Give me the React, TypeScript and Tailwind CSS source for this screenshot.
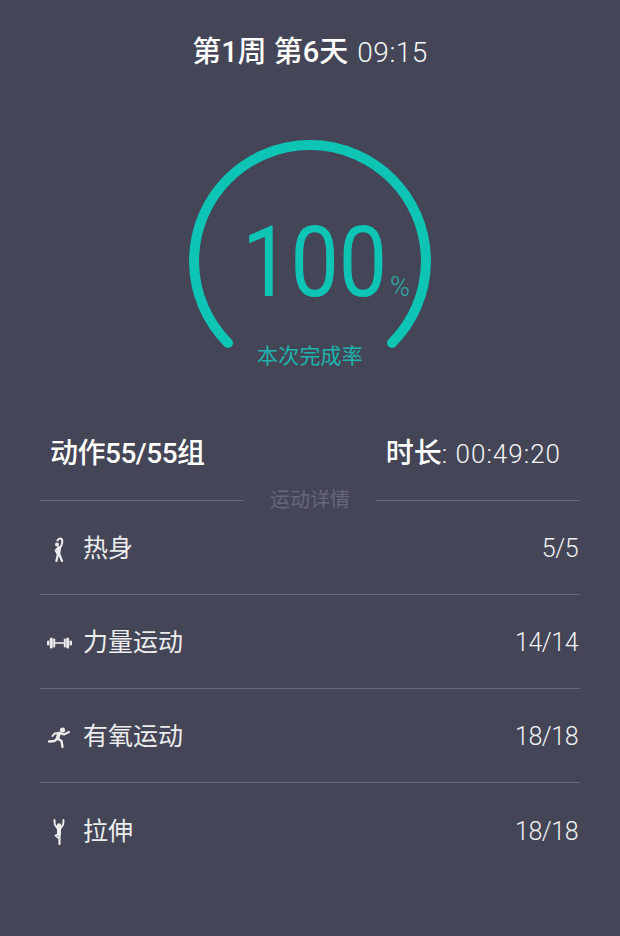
import React from "react";

const cjk = "font-['Roboto','Noto_Sans_CJK_SC',sans-serif]";

// small pictograms for each training section
const WarmupIcon = () => (
  <svg width="11" height="25" viewBox="0 0 11 25" fill="none" stroke="#eceded" strokeLinecap="round" strokeLinejoin="round">
    <circle cx="3" cy="7.500" r="2" fill="#eceded" stroke="none" />
    <path d="M5.500 12C8.500 8 9.500 2 6.500 1.500 5 1.300 4 2.500 3.500 3.500" strokeWidth="2" />
    <path d="M3.500 11L1.500 13.500 3.300 16.500" strokeWidth="1.700" />
    <path d="M5 11L4.400 16" strokeWidth="4" />
    <path d="M4.200 16L2.400 24M4.800 16L8 24" strokeWidth="2.200" />
  </svg>
);

const DumbbellIcon = () => (
  <svg width="25" height="12" viewBox="0 0 25 12" fill="#eceded">
    <rect x="0" y="3.500" width="2.400" height="5" rx="1.200" />
    <rect x="2.800" y="0.500" width="3" height="11" rx="1.500" />
    <rect x="6.200" y="1.500" width="2" height="9" rx="1" />
    <rect x="7.500" y="5.200" width="10" height="1.600" />
    <rect x="16.800" y="1.500" width="2" height="9" rx="1" />
    <rect x="19.200" y="0.500" width="3" height="11" rx="1.500" />
    <rect x="22.600" y="3.500" width="2.400" height="5" rx="1.200" />
  </svg>
);

const RunIcon = () => (
  <svg width="24" height="21" viewBox="0 0 24 21" fill="none" stroke="#eceded" strokeLinecap="round" strokeLinejoin="round">
    <circle cx="15.500" cy="3" r="2.600" fill="#eceded" stroke="none" />
    <path d="M12 6.500L10.500 11.500" strokeWidth="3.600" />
    <path d="M12.500 6L17 7.500 22 5M12 6L7.500 6.500 5.500 9" strokeWidth="2" />
    <path d="M10.500 11.500L7.500 14 2 14.500M10.500 11.500L14.500 14 15.500 20" strokeWidth="2.300" />
  </svg>
);

const StretchIcon = () => (
  <svg width="12" height="26" viewBox="0 0 12 26" fill="none" stroke="#eceded" strokeLinecap="round" strokeLinejoin="round">
    <circle cx="6" cy="6.500" r="2.200" fill="#eceded" stroke="none" />
    <path d="M1.500 1L1.800 5.500 4.500 9.500M10.500 1L10.200 5.500 7.500 9.500" strokeWidth="1.900" />
    <path d="M6 9.500L6 15" strokeWidth="4" />
    <path d="M6.500 15L6.500 25" strokeWidth="2.200" />
    <path d="M5.500 15L2.500 16.500 5.500 19" strokeWidth="1.900" />
  </svg>
);

const sections = [
  { name: "热身", value: "5/5", icon: <WarmupIcon /> },
  { name: "力量运动", value: "14/14", icon: <DumbbellIcon /> },
  { name: "有氧运动", value: "18/18", icon: <RunIcon /> },
  { name: "拉伸", value: "18/18", icon: <StretchIcon /> },
];

export default function App() {
  return (
    <div className={`w-[620px] h-[936px] bg-[#444557] overflow-hidden ${cjk}`}>
      <h1 className="mt-[33px] h-[40px] flex justify-center items-center gap-[9px] text-[29px] font-medium text-white">
        <span>第1周 第6天</span>
        <span className="font-light text-[28px] tracking-[0.5px] text-[#f4f5f5]">09:15</span>
      </h1>

      <div className="relative mt-[67px] mx-auto w-[242px] h-[240px]">
        <svg width="242" height="240" viewBox="0 0 242 240" fill="none">
          <path
            d="M39 203 A116 116 0 1 1 203 203"
            stroke="#0dc4b5"
            strokeWidth="10"
            strokeLinecap="round"
          />
        </svg>
        <div className="absolute left-[53px] top-[62px] flex items-baseline text-[#0dc4b5]">
          <span className="inline-block w-[138px] origin-left scale-x-[0.87] font-normal text-[99px] leading-[120px]">
            100
          </span>
          <span className="ml-[10px] font-light text-[27px] text-[#2fa9a6]">%</span>
        </div>
        <div className="absolute inset-x-0 top-[202px] text-center text-[21px] tracking-[0.2px] leading-[28px] text-[#1db5ad]">
          本次完成率
        </div>
      </div>

      <div className="mt-[54px] px-[50px] pr-[59px] h-[40px] flex justify-between items-center text-white">
        <span className="text-[28px] font-medium tracking-[-0.5px]">动作55/55组</span>
        <span className="text-[28px] font-medium">
          时长<span className="text-[26px] font-light tracking-[1px] text-[#f4f5f5]">: 00:49:20</span>
        </span>
      </div>

      <div className="mx-[40px] mt-[12px] h-[28px] flex items-center">
        <div className="w-[204px] h-px bg-[#66677a]" />
        <span className="flex-1 text-center text-[20px] text-[#66677a]">运动详情</span>
        <div className="w-[204px] h-px bg-[#66677a]" />
      </div>

      <ul className="mx-[40px] -mt-[13px]">
        {sections.map((s, i) => (
          <li
            key={s.name}
            className={`h-[94px] pt-[3px] flex items-center ${
              i < sections.length - 1 ? "border-b border-[#66677a]" : ""
            }`}
          >
            <div className="w-[38px] flex justify-center">{s.icon}</div>
            <span className="ml-[5px] text-[25px] text-[#eceded]">{s.name}</span>
            <span className="ml-auto mr-[2px] text-[25px] font-light tracking-[-0.5px] text-[#f0f1f1]">{s.value}</span>
          </li>
        ))}
      </ul>
    </div>
  );
}
